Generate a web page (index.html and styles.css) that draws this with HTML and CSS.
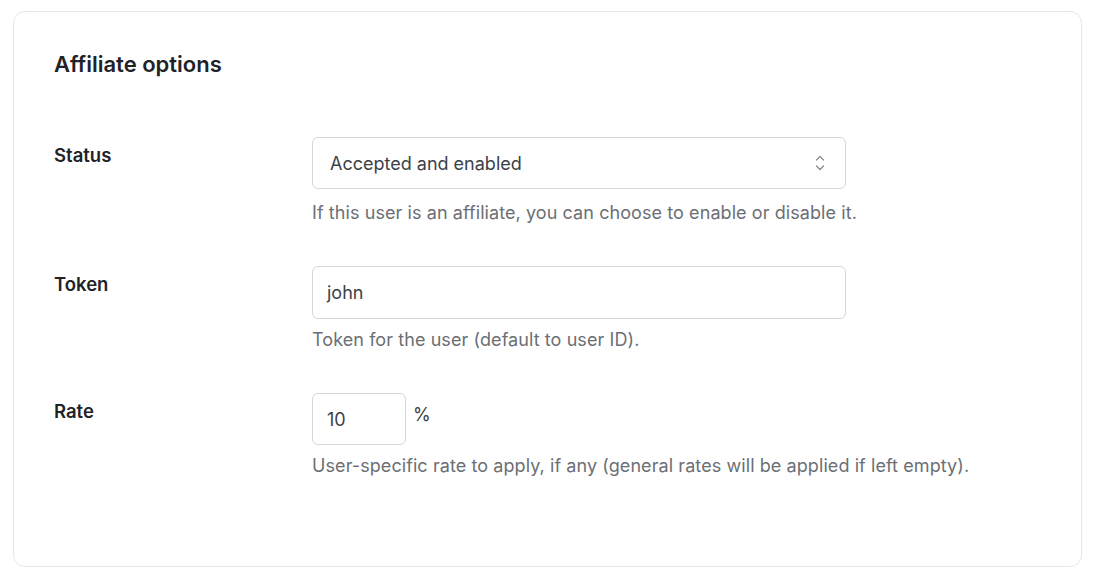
FILE: index.html
```html
<!DOCTYPE html>
<html>
<head>
<meta charset="utf-8">
<link rel="stylesheet" href="styles.css">
</head>
<body>
<div class="card">
  <h2 class="title">Affiliate options</h2>
  <div class="rows">
    <div class="row">
      <div class="label">Status</div>
      <div class="field">
        <div class="select">
          <span>Accepted and enabled</span>
          <svg class="chev" width="10" height="18" viewBox="0 0 10 18" fill="none" stroke="#8a8f96" stroke-width="1.4" stroke-linecap="round" stroke-linejoin="round"><path d="M1.5 6 L5 2.5 L8.5 6"/><path d="M1.5 12 L5 15.5 L8.5 12"/></svg>
        </div>
        <div class="help first">If this user is an affiliate, you can choose to enable or disable it.</div>
      </div>
    </div>
    <div class="row">
      <div class="label">Token</div>
      <div class="field">
        <div class="input wide">john</div>
        <div class="help">Token for the user (default to user ID).</div>
      </div>
    </div>
    <div class="row">
      <div class="label">Rate</div>
      <div class="field">
        <div class="inline">
          <div class="input small">10</div>
          <span class="unit">%</span>
        </div>
        <div class="help">User-specific rate to apply, if any (general rates will be applied if left empty).</div>
      </div>
    </div>
  </div>
</div>
</body>
</html>
```
FILE: styles.css
```css
html, body { margin: 0; padding: 0; background: #fff; }
body {
  font-family: Inter, "Noto Sans", sans-serif;
  color: #1f2328;
  padding: 11px 14px 0 13px;
}
.card {
  box-sizing: border-box;
  width: 1069px;
  height: 556px;
  border: 1px solid #e6e7e9;
  border-radius: 12px;
  padding: 38px 40px 0 40px;
}
.title {
  margin: 0;
  font-size: 22px;
  font-weight: 600;
  line-height: 28px;
  color: #1f2328;
}
.rows { margin-top: 59px; display: flex; flex-direction: column; gap: 42px; }
.row { display: flex; }
.label {
  width: 258px;
  font-size: 18.5px;
  font-weight: 600;
  line-height: 22px;
  padding-top: 7px;
  color: #1f2328;
}
.field { display: flex; flex-direction: column; }
.select, .input {
  box-sizing: border-box;
  border: 1px solid #d4d6da;
  border-radius: 6px;
  font-size: 18px;
  color: #3c4148;
  display: flex;
  align-items: center;
}
.select {
  width: 534px; height: 52px;
  padding: 0 20px 0 17px;
  justify-content: space-between;
}
.input.wide { width: 534px; height: 53px; padding: 0 14px; }
.inline { display: flex; align-items: flex-start; }
.input.small { width: 94px; height: 52px; padding: 0 14px; }
.unit { font-size: 18px; line-height: 22px; color: #3c4148; margin-left: 7px; margin-top: 11px; }
.help {
  margin-top: 10px;
  font-size: 18px;
  letter-spacing: 0.08px;
  color: #6b6f75;
  line-height: 22px;
}
.help.first { margin-top: 13px; }
```
